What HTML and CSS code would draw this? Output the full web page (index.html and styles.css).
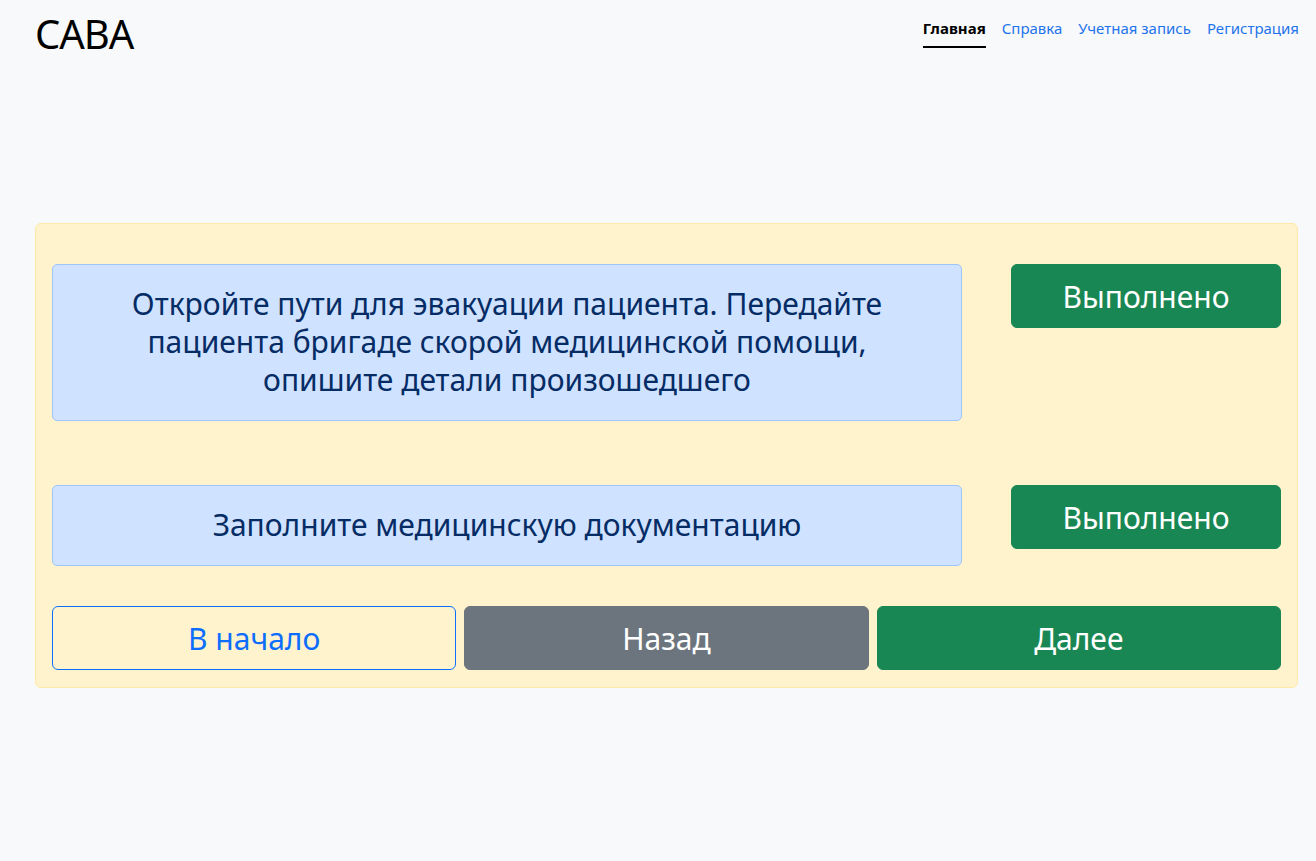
FILE: index.html
```html
<!DOCTYPE html>
<html lang="ru">
<head>
<meta charset="utf-8">
<title>CABA</title>
<link rel="stylesheet" href="styles.css">
</head>
<body>
<div class="page">
  <header class="header">
    <div class="brand">CABA</div>
    <nav class="nav">
      <a class="nav-link active" href="#">Главная</a>
      <a class="nav-link" href="#">Справка</a>
      <a class="nav-link" href="#">Учетная запись</a>
      <a class="nav-link" href="#">Регистрация</a>
    </nav>
  </header>
  <main class="card">
    <div class="step-row first">
      <div class="step-text">Откройте пути для эвакуации пациента. Передайте<br>пациента бригаде скорой медицинской помощи,<br>опишите детали произошедшего</div>
      <button class="btn btn-success">Выполнено</button>
    </div>
    <div class="step-row second">
      <div class="step-text">Заполните медицинскую документацию</div>
      <button class="btn btn-success">Выполнено</button>
    </div>
    <div class="nav-buttons">
      <button class="btn btn-outline">В начало</button>
      <button class="btn btn-secondary">Назад</button>
      <button class="btn btn-success">Далее</button>
    </div>
  </main>
</div>
</body>
</html>
```

FILE: styles.css
```css
html, body {
  margin: 0;
  padding: 0;
  background: #f8f9fa;
  font-family: "Noto Sans", "Open Sans", sans-serif;
  color: #212529;
}
.page {
  padding: 0 17px 0 35px;
}
.header {
  display: flex;
  justify-content: space-between;
  align-items: flex-start;
  height: 60px;
}
.brand {
  font-size: 40px;
  line-height: 1;
  padding-top: 14px;
  color: #000;
  letter-spacing: -1px;
}
.nav {
  display: flex;
  gap: 16px;
  padding-top: 18px;
}
.nav-link {
  font-size: 15px;
  line-height: 20px;
  color: #1f74ec;
  text-decoration: none;
  padding-bottom: 8px;
  border-bottom: 2px solid transparent;
}
.nav-link.active {
  color: #000;
  font-weight: 700;
  border-bottom-color: #000;
}
.card {
  margin-top: 163px;
  margin-right: 1px;
  background: #fff3cd;
  border: 1px solid #ffe9a8;
  border-radius: 6px;
  padding: 40px 16px 17px;
}
.step-row {
  display: grid;
  grid-template-columns: 1fr 270px;
  column-gap: 49px;
  align-items: start;
}
.step-row.second {
  margin-top: 64px;
}
.step-text {
  background: #cfe2ff;
  border: 1px solid #9ec5fe;
  border-radius: 5px;
  color: #052c65;
  font-size: 30px;
  line-height: 38px;
  padding: 20px 16px 21px;
  text-align: center;
}
.btn {
  font-family: inherit;
  font-size: 30px;
  height: 64px;
  border-radius: 6px;
  border: 1px solid transparent;
  color: #fff;
  cursor: pointer;
  padding: 0 12px;
}
.btn-success {
  background: #198754;
  border-color: #198754;
}
.btn-secondary {
  background: #6c757d;
  border-color: #6c757d;
}
.btn-outline {
  background: transparent;
  border-color: #0d6efd;
  color: #0d6efd;
}
.nav-buttons {
  margin-top: 40px;
  display: grid;
  grid-template-columns: 1fr 1fr 1fr;
  gap: 8px;
}
```
